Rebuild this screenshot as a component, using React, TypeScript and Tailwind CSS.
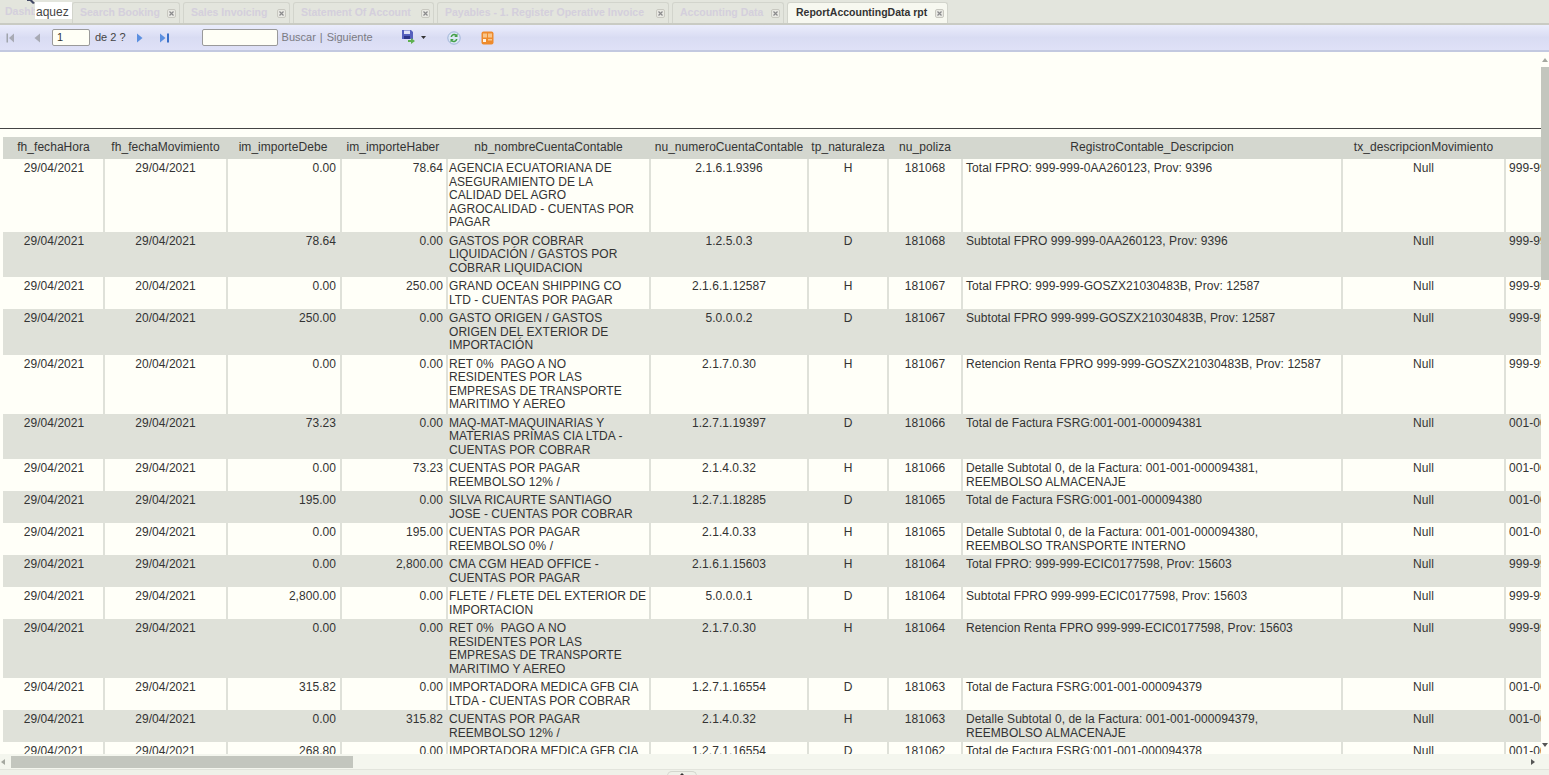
const headers = [
  "fh_fechaHora",
  "fh_fechaMovimiento",
  "im_importeDebe",
  "im_importeHaber",
  "nb_nombreCuentaContable",
  "nu_numeroCuentaContable",
  "tp_naturaleza",
  "nu_poliza",
  "RegistroContable_Descripcion",
  "tx_descripcionMovimiento",
  "",
];

const rows = [
  ["29/04/2021", "29/04/2021", "0.00", "78.64", "AGENCIA ECUATORIANA DE ASEGURAMIENTO DE LA CALIDAD DEL AGRO AGROCALIDAD - CUENTAS POR PAGAR", "2.1.6.1.9396", "H", "181068", "Total FPRO: 999-999-0AA260123, Prov: 9396", "999-999"],
  ["29/04/2021", "29/04/2021", "78.64", "0.00", "GASTOS POR COBRAR LIQUIDACIÓN / GASTOS POR COBRAR LIQUIDACION", "1.2.5.0.3", "D", "181068", "Subtotal FPRO 999-999-0AA260123, Prov: 9396", "999-999"],
  ["29/04/2021", "20/04/2021", "0.00", "250.00", "GRAND OCEAN SHIPPING CO\nLTD - CUENTAS POR PAGAR", "2.1.6.1.12587", "H", "181067", "Total FPRO: 999-999-GOSZX21030483B, Prov: 12587", "999-999"],
  ["29/04/2021", "20/04/2021", "250.00", "0.00", "GASTO ORIGEN / GASTOS ORIGEN DEL EXTERIOR DE IMPORTACIÓN", "5.0.0.0.2", "D", "181067", "Subtotal FPRO 999-999-GOSZX21030483B, Prov: 12587", "999-999"],
  ["29/04/2021", "20/04/2021", "0.00", "0.00", "RET 0%  PAGO A NO\nRESIDENTES POR LAS\nEMPRESAS DE TRANSPORTE\nMARITIMO Y AEREO", "2.1.7.0.30", "H", "181067", "Retencion Renta FPRO 999-999-GOSZX21030483B, Prov: 12587", "999-999"],
  ["29/04/2021", "29/04/2021", "73.23", "0.00", "MAQ-MAT-MAQUINARIAS Y MATERIAS PRIMAS CIA LTDA - CUENTAS POR COBRAR", "1.2.7.1.19397", "D", "181066", "Total de Factura FSRG:001-001-000094381", "001-001"],
  ["29/04/2021", "29/04/2021", "0.00", "73.23", "CUENTAS POR PAGAR REEMBOLSO 12% /", "2.1.4.0.32", "H", "181066", "Detalle Subtotal 0, de la Factura: 001-001-000094381, REEMBOLSO ALMACENAJE", "001-001"],
  ["29/04/2021", "29/04/2021", "195.00", "0.00", "SILVA RICAURTE SANTIAGO\nJOSE - CUENTAS POR COBRAR", "1.2.7.1.18285", "D", "181065", "Total de Factura FSRG:001-001-000094380", "001-001"],
  ["29/04/2021", "29/04/2021", "0.00", "195.00", "CUENTAS POR PAGAR REEMBOLSO 0% /", "2.1.4.0.33", "H", "181065", "Detalle Subtotal 0, de la Factura: 001-001-000094380, REEMBOLSO TRANSPORTE INTERNO", "001-001"],
  ["29/04/2021", "29/04/2021", "0.00", "2,800.00", "CMA CGM HEAD OFFICE - CUENTAS POR PAGAR", "2.1.6.1.15603", "H", "181064", "Total FPRO: 999-999-ECIC0177598, Prov: 15603", "999-999"],
  ["29/04/2021", "29/04/2021", "2,800.00", "0.00", "FLETE / FLETE DEL EXTERIOR DE IMPORTACION", "5.0.0.0.1", "D", "181064", "Subtotal FPRO 999-999-ECIC0177598, Prov: 15603", "999-999"],
  ["29/04/2021", "29/04/2021", "0.00", "0.00", "RET 0%  PAGO A NO\nRESIDENTES POR LAS\nEMPRESAS DE TRANSPORTE\nMARITIMO Y AEREO", "2.1.7.0.30", "H", "181064", "Retencion Renta FPRO 999-999-ECIC0177598, Prov: 15603", "999-999"],
  ["29/04/2021", "29/04/2021", "315.82", "0.00", "IMPORTADORA MEDICA GFB CIA LTDA - CUENTAS POR COBRAR", "1.2.7.1.16554", "D", "181063", "Total de Factura FSRG:001-001-000094379", "001-001"],
  ["29/04/2021", "29/04/2021", "0.00", "315.82", "CUENTAS POR PAGAR REEMBOLSO 12% /", "2.1.4.0.32", "H", "181063", "Detalle Subtotal 0, de la Factura: 001-001-000094379, REEMBOLSO ALMACENAJE", "001-001"],
  ["29/04/2021", "29/04/2021", "268.80", "0.00", "IMPORTADORA MEDICA GFB CIA LTDA - CUENTAS POR COBRAR", "1.2.7.1.16554", "D", "181062", "Total de Factura FSRG:001-001-000094378", "001-001"],
];

const tabs = [
  { label: "Search Booking", w: "w-[108px]" },
  { label: "Sales Invoicing", w: "w-[107px]" },
  { label: "Statement Of Account", w: "w-[141px]" },
  { label: "Payables - 1. Register Operative Invoice", w: "w-[232px]" },
  { label: "Accounting Data", w: "w-[112px]" },
];

const TabClose = () => (
  <svg className="shrink-0" width="9" height="9" viewBox="0 0 9 9">
    <rect x="0.5" y="0.5" width="8" height="8" rx="1.5" fill="#e9e9e3" stroke="#c8c8c0" />
    <path d="M2.5 2.5 L6.5 6.5 M6.5 2.5 L2.5 6.5" stroke="#8a8a8c" strokeWidth="1.2" />
  </svg>
);

const cellBase = "pt-[3px] pb-[2px] align-top";
const sep = "border-r-2 border-[#dfe1d9]";

const App = () => {
  return (
    <div className="flex h-[775px] w-[1549px] flex-col overflow-hidden bg-[#f0f2ea] font-['Liberation_Sans',sans-serif] text-[#333]">
      {/* tab strip */}
      <div className="relative flex h-[25px] shrink-0 items-start gap-[3px] border-b-2 border-[#c9cbc3] bg-[#e3e5dd] pt-[2px] text-[10.5px] font-bold">
        <div className="flex h-[20px] w-[69px] shrink-0 items-center pl-[5px] text-[#d4cfdc]">Dashb</div>
        {tabs.map((t) => (
          <div
            key={t.label}
            className={`flex h-[21px] ${t.w} shrink-0 items-center justify-between rounded-t-[3px] border border-b-0 border-[#d2d4cc] pr-[3px] pl-[7px] text-[#d4cfdc]`}
          >
            <span className="whitespace-nowrap">{t.label}</span>
            <TabClose />
          </div>
        ))}
        <div className="flex h-[21px] w-[161px] shrink-0 items-center justify-between rounded-t-[3px] border border-b-0 border-[#d2d4cc] bg-[#f7f8f0] pr-[3px] pl-[8px] text-[#333]">
          <span className="whitespace-nowrap">ReportAccountingData rpt</span>
          <TabClose />
        </div>
        {/* tooltip left over from the mouse pointer */}
        <div className="absolute top-[2px] left-[35px] h-[17px] w-[37px] bg-white pl-[1px] text-[12px] leading-[21px] font-normal text-[#444]">
          aquez
        </div>
        <svg className="absolute top-0 left-[27px]" width="8" height="4" viewBox="0 0 8 4">
          <path d="M0 0 H5 L8 3 L6 4 L3 1 H0 Z" fill="#444a66" />
        </svg>
      </div>

      {/* report toolbar */}
      <div className="flex h-[27px] shrink-0 items-center border-b-2 border-[#c3c9e0] bg-gradient-to-b from-[#ebedfc] via-[#d9dcf3] to-[#dfe1f7] text-[11px] text-[#5a5a66]">
        <svg className="ml-[6px]" width="9" height="10" viewBox="0 0 9 10">
          <rect x="0.5" y="0.5" width="1.5" height="9" fill="#a0a4ac" />
          <path d="M8 0.5 V9.5 L3 5 Z" fill="#a8aab4" />
        </svg>
        <svg className="ml-[19px]" width="7" height="10" viewBox="0 0 7 10">
          <path d="M6 0.5 V9.5 L0.5 5 Z" fill="#a8aab4" />
        </svg>
        <div className="ml-[11px] h-[17px] w-[38px] rounded-[2px] border border-[#9a9a9a] bg-[#fffff6] pl-[4px] text-[11px] leading-[15px] text-[#333]">1</div>
        <span className="ml-[5px] text-[#444]">de 2 ?</span>
        <svg className="ml-[10px]" width="7" height="10" viewBox="0 0 7 10">
          <path d="M1 0.5 V9.5 L6.5 5 Z" fill="#5b8fe0" />
        </svg>
        <svg className="ml-[16px]" width="11" height="10" viewBox="0 0 11 10">
          <path d="M1 0.5 V9.5 L6.5 5 Z" fill="#5b8fe0" />
          <rect x="8" y="0.5" width="2" height="9" fill="#3a6fc8" />
        </svg>
        <div className="ml-[32px] h-[17px] w-[76px] rounded-[2px] border border-[#9a9a9a] bg-[#fffff6]" />
        <span className="ml-[4px] text-[#7a7a82]">Buscar</span>
        <span className="ml-[4px] text-[#7a7a82]">|</span>
        <span className="ml-[4px] text-[#7a7a82]">Siguiente</span>
        <svg className="mb-[3px] ml-[28px]" width="15" height="15" viewBox="0 0 15 15">
          <path d="M1 1 H10 L12 3 V10 H1 Z" fill="#5560bd" />
          <rect x="3" y="1.5" width="6" height="3.5" fill="#dfe3f7" />
          <rect x="3" y="7" width="6" height="3" fill="#2c3588" />
          <path d="M7 11 H10 V9 L14 12 L10 15 V13 H7 Z" fill="#5eb14f" />
        </svg>
        <svg className="ml-[5px]" width="5" height="3" viewBox="0 0 5 3">
          <path d="M0 0 H5 L2.5 3 Z" fill="#333" />
        </svg>
        <svg className="ml-[21px]" width="14" height="14" viewBox="0 0 14 14">
          <circle cx="7" cy="7" r="6.2" fill="#dbe6f6" stroke="#9fb4d8" />
          <path d="M3.5 6 A3.8 3.8 0 0 1 9.5 3.5 L10.5 2.5 V6 H7.2 L8.5 4.8 A2.4 2.4 0 0 0 5 6 Z" fill="#43a047" />
          <path d="M10.5 8 A3.8 3.8 0 0 1 4.5 10.5 L3.5 11.5 V8 H6.8 L5.5 9.2 A2.4 2.4 0 0 0 9 8 Z" fill="#43a047" />
        </svg>
        <svg className="ml-[20px]" width="13" height="14" viewBox="0 0 13 14">
          <rect x="0.5" y="0.5" width="12" height="13" rx="2" fill="#ee8a2c" />
          <rect x="2" y="2.5" width="4" height="4" fill="#f9c58a" />
          <rect x="7" y="2.5" width="4" height="4" fill="#f9c58a" />
          <rect x="2" y="8" width="3" height="3" fill="#fff3e2" />
          <rect x="7" y="8" width="4" height="1.5" fill="#f9c58a" />
        </svg>
      </div>

      {/* report area */}
      <div className="flex h-[717px] shrink-0 flex-col bg-[#fffff8]">
        <div className="flex min-h-0 flex-1">
          <div className="min-w-0 flex-1 overflow-hidden">
            <div className="h-[77px] w-[1541px] border-b border-[#444]" />
            <table className="mt-[8px] ml-[3px] w-[1538px] table-fixed border-collapse text-[12px] leading-[13.5px] tracking-[0.05px] text-[#333]">
              <colgroup>
                <col className="w-[101px]" />
                <col className="w-[123px]" />
                <col className="w-[114px]" />
                <col className="w-[106px]" />
                <col className="w-[203px]" />
                <col className="w-[158px]" />
                <col className="w-[80px]" />
                <col className="w-[74px]" />
                <col className="w-[380px]" />
                <col className="w-[163px]" />
                <col className="w-[36px]" />
              </colgroup>
              <thead>
                <tr className="h-[22px] bg-[#d4d7cf]">
                  {headers.map((h, i) => (
                    <th key={i} className={`p-0 text-center font-normal whitespace-nowrap ${i === 2 || i === 3 ? "pr-[2px]" : ""}`}>
                      {h}
                    </th>
                  ))}
                </tr>
              </thead>
              <tbody>
                {rows.map((r, i) => (
                  <tr key={i} className={i % 2 === 1 ? "bg-[#dfe1d9]" : "bg-[#fffff8]"}>
                    <td className={`${cellBase} ${sep} pr-[2px] pl-[4px] text-center`}>{r[0]}</td>
                    <td className={`${cellBase} ${sep} px-[3px] text-center`}>{r[1]}</td>
                    <td className={`${cellBase} ${sep} pr-[4px] pl-[3px] text-right`}>{r[2]}</td>
                    <td className={`${cellBase} ${sep} pr-[3px] pl-[3px] text-right`}>{r[3]}</td>
                    <td className={`${cellBase} ${sep} pr-[1.5px] pl-[1px] whitespace-pre-wrap`}>{r[4]}</td>
                    <td className={`${cellBase} ${sep} px-[3px] text-center`}>{r[5]}</td>
                    <td className={`${cellBase} ${sep} px-[3px] text-center`}>{r[6]}</td>
                    <td className={`${cellBase} ${sep} px-[3px] text-center`}>{r[7]}</td>
                    <td className={`${cellBase} ${sep} pr-[12px] pl-[3px]`}>{r[8]}</td>
                    <td className={`${cellBase} ${sep} px-[3px] text-center`}>Null</td>
                    <td className={`${cellBase} overflow-hidden pl-[3px] whitespace-nowrap`}>{r[9]}</td>
                  </tr>
                ))}
              </tbody>
            </table>
          </div>
          {/* vertical scrollbar */}
          <div className="flex w-[8px] shrink-0 flex-col items-center">
            <svg className="mt-[6px]" width="6" height="4" viewBox="0 0 6 4">
              <path d="M3 0 L6 4 H0 Z" fill="#a5a8a0" />
            </svg>
            <div className="mt-[5px] h-[213px] w-full bg-[#c3c6be]" />
            <div className="flex-1" />
            <svg className="mb-[7px]" width="6" height="4" viewBox="0 0 6 4">
              <path d="M3 4 L6 0 H0 Z" fill="#555" />
            </svg>
          </div>
        </div>
        {/* horizontal scrollbar */}
        <div className="flex h-[15px] shrink-0 items-center bg-[#f4f6ee]">
          <svg className="ml-[1px]" width="4" height="6" viewBox="0 0 4 6">
            <path d="M0 3 L4 0 V6 Z" fill="#a5a8a0" />
          </svg>
          <div className="ml-[6px] h-[12px] w-[342px] bg-[#c3c6be]" />
          <div className="flex-1" />
          <svg className="mr-[14px]" width="4" height="6" viewBox="0 0 4 6">
            <path d="M4 3 L0 0 V6 Z" fill="#555" />
          </svg>
        </div>
      </div>

      {/* splitter */}
      <div className="flex flex-1 border-t border-[#e2e4dc] bg-[#eff1e9] pl-[667px]">
        <div className="mt-[1px] h-[5px] w-[30px] rounded-t-[6px] border border-b-0 border-[#d4d6ce]">
          <div className="mx-auto mt-[1px] h-0 w-0 border-x-[3px] border-b-[3px] border-x-transparent border-b-[#333]" />
        </div>
      </div>
    </div>
  );
};

export default App;
